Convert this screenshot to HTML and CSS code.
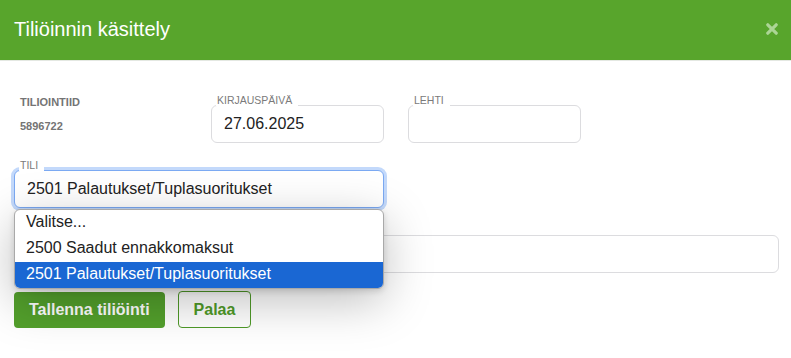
FILE: index.html
```html
<!DOCTYPE html>
<html lang="fi">
<head>
<meta charset="utf-8">
<title>Tiliöinnin käsittely</title>
<link rel="stylesheet" href="styles.css">
</head>
<body>
<div class="modal">
  <header class="modal-header">
    <h1 class="modal-title">Tiliöinnin käsittely</h1>
    <button class="close" aria-label="Sulje">
      <svg width="12" height="12" viewBox="0 0 12 12"><path d="M1.8 1.8 L10.2 10.2 M10.2 1.8 L1.8 10.2" stroke="currentColor" stroke-width="3.2" stroke-linecap="round"/></svg>
    </button>
  </header>
  <div class="modal-body">
    <div class="row row-3">
      <div class="static">
        <div class="static-label">TILIOINTIID</div>
        <div class="static-value">5896722</div>
      </div>
      <div class="field">
        <label class="float-label">KIRJAUSPÄIVÄ</label>
        <div class="input">27.06.2025</div>
      </div>
      <div class="field">
        <label class="float-label">LEHTI</label>
        <div class="input"></div>
      </div>
    </div>
    <div class="row row-2">
      <div class="field select-field">
        <label class="float-label">TILI</label>
        <div class="input select focus">2501 Palautukset/Tuplasuoritukset</div>
        <ul class="dropdown">
          <li class="option">Valitse...</li>
          <li class="option">2500 Saadut ennakkomaksut</li>
          <li class="option selected">2501 Palautukset/Tuplasuoritukset</li>
        </ul>
      </div>
    </div>
    <div class="row">
      <div class="field">
        <div class="input"></div>
      </div>
    </div>
    <div class="actions">
      <button class="btn btn-primary">Tallenna tiliöinti</button>
      <button class="btn btn-outline">Palaa</button>
    </div>
  </div>
</div>
</body>
</html>
```
FILE: styles.css
```css
* { box-sizing: border-box; }
html, body { margin: 0; padding: 0; background: #fff; }
body {
  font-family: "Liberation Sans", Arial, sans-serif;
  color: #222;
  width: 791px;
  height: 358px;
  overflow: hidden;
}
.modal-header {
  height: 61px;
  background: #58a52c;
  border-bottom: 1px solid #e4e8e2;
  display: flex;
  align-items: center;
  justify-content: space-between;
  padding: 0 13px 2px 14px;
}
.modal-title {
  margin: 0;
  font-size: 20px;
  font-weight: normal;
  color: #fff;
  line-height: 24px;
}
.close {
  border: 0;
  background: none;
  padding: 0;
  color: #acd595;
  display: flex;
  margin-top: -1px;
}
.modal-body {
  padding: 32px 12px 0 14px;
}
.row { margin-bottom: 15px; }
.row-3 {
  display: grid;
  grid-template-columns: 173px 173px 173px;
  column-gap: 24px;
}
.row-2 {
  display: grid;
  grid-template-columns: 370px;
  position: relative;
  z-index: 2;
}
.static { padding-top: 3px; padding-left: 6px; }
.static-label {
  font-size: 11px;
  font-weight: bold;
  color: #747474;
  line-height: 13px;
}
.static-value {
  margin-top: 11px;
  font-size: 11px;
  font-weight: bold;
  color: #747474;
  line-height: 13px;
}
.field {
  position: relative;
  padding-top: 12px;
}
.float-label {
  position: absolute;
  top: 1px;
  left: 5px;
  padding: 0 6px 0 1px;
  background: #fff;
  font-size: 10.5px;
  line-height: 12px;
  color: #7a7a7a;
  z-index: 1;
}
.input {
  height: 38px;
  border: 1px solid #dcdcdf;
  border-radius: 6px;
  padding: 0 12px;
  font-size: 16px;
  line-height: 36px;
  color: #222;
  background: #fff;
}
.select.focus {
  border-color: #7ba9f2;
  box-shadow: 0 0 0 3px #c3d9fb;
}
.dropdown {
  position: absolute;
  top: 51px;
  left: 0;
  width: 370px;
  margin: 0;
  padding: 0;
  list-style: none;
  background: #fff;
  border: 1px solid #a9a9a9;
  border-radius: 6px;
  overflow: hidden;
  box-shadow: 0 12px 48px rgba(0,0,0,0.26), 0 2px 6px rgba(0,0,0,0.14);
  z-index: 3;
}
.option {
  height: 26px;
  line-height: 24px;
  padding: 0 11px;
  font-size: 16px;
  color: #222;
}
.option.selected {
  background: #1a67d3;
  color: #fff;
}
.actions {
  display: flex;
  gap: 13px;
  margin-top: 18px;
  align-items: flex-start;
}
.btn {
  font-family: "Liberation Sans", Arial, sans-serif;
  font-size: 16px;
  font-weight: bold;
  height: 37px;
  border-radius: 4px;
  padding: 0 15px;
  cursor: pointer;
}
.btn-primary {
  background: #53a02c;
  color: #fff;
  border: 0;
  margin-top: 1px;
  height: 36px;
  padding: 0 15px;
}
.btn-outline {
  background: #fff;
  color: #4f9a28;
  border: 1px solid #4f9a28;
}
```
